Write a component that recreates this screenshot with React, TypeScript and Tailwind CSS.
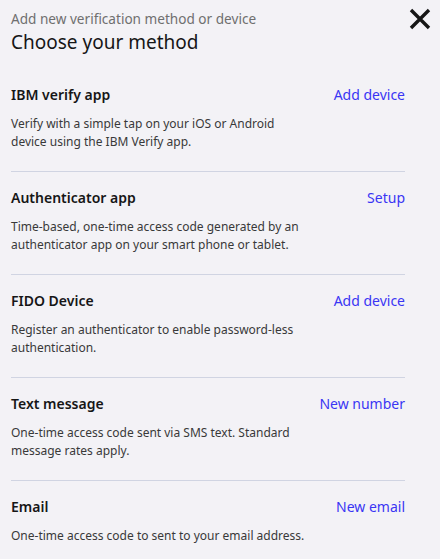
const methods = [
  {
    title: "IBM verify app",
    action: "Add device",
    text: "Verify with a simple tap on your iOS or Android device using the IBM Verify app.",
    width: "max-w-[300px]",
  },
  {
    title: "Authenticator app",
    action: "Setup",
    text: "Time-based, one-time access code generated by an authenticator app on your smart phone or tablet.",
    width: "max-w-[300px]",
  },
  {
    title: "FIDO Device",
    action: "Add device",
    text: "Register an authenticator to enable password-less authentication.",
    width: "max-w-[300px]",
  },
  {
    title: "Text message",
    action: "New number",
    text: "One-time access code sent via SMS text. Standard message rates apply.",
    width: "max-w-[300px]",
  },
  {
    title: "Email",
    action: "New email",
    text: "One-time access code to sent to your email address.",
    width: "max-w-[340px]",
  },
];

export default function App() {
  return (
    <main className="min-h-screen bg-[#f3f2f6] text-[#161616] font-['Noto_Sans',sans-serif] relative">
      {/* HEADER */}
      <header className="pl-[11px] pt-[9px]">
        <p className="text-[13.6px] leading-[20px] text-[#6f6f6f]">
          Add new verification method or device
        </p>
        <h1 className="text-[19px] leading-[26px] text-[#161616]">Choose your method</h1>
      </header>

      <button className="absolute right-[9px] top-[8px] w-[22px] h-[22px]" aria-label="Close">
        <svg viewBox="0 0 22 22" className="w-full h-full">
          <path d="M2 2 L20 20 M20 2 L2 20" stroke="#161616" strokeWidth="3.4" />
        </svg>
      </button>

      {/* METHODS */}
      <div className="pl-[11px] pr-[35px] pt-[31px]">
        {methods.map((m, i) => (
          <section
            key={m.title}
            className={
              i === 0
                ? "pb-[20px] border-b border-[#d0d4e2]"
                : i === methods.length - 1
                ? "pt-[17px] pb-[20px]"
                : "pt-[17px] pb-[20px] border-b border-[#d0d4e2]"
            }
          >
            <div className="flex items-center justify-between">
              <h2 className="text-[14px] leading-[18px] font-semibold">{m.title}</h2>
              <a href="#" className="text-[14px] leading-[18px] text-[#3a36f4]">
                {m.action}
              </a>
            </div>
            <p className={`mt-[11px] ${m.width} text-[12px] leading-[18px] text-[#393939]`}>
              {m.text}
            </p>
          </section>
        ))}
      </div>
    </main>
  );
}
